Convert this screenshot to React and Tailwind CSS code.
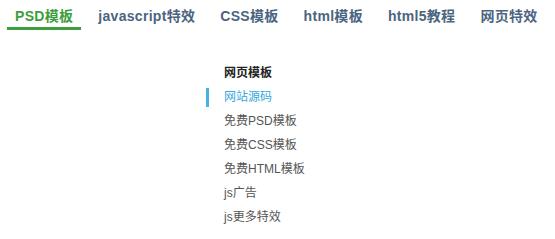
export default function App() {
  const tabs = ["PSD模板", "javascript特效", "CSS模板", "html模板", "html5教程", "网页特效"];
  const items = ["免费PSD模板", "免费CSS模板", "免费HTML模板", "js广告", "js更多特效"];
  return (
    <div className="w-[555px] h-[239px] bg-white overflow-hidden" style={{ fontFamily: '"Liberation Sans", "Noto Sans CJK SC", sans-serif' }}>
      <div className="flex pl-[7px] gap-[9px]">
        {tabs.map((t, i) => (
          <div
            key={t}
            className={
              "px-2 pt-[6px] pb-px text-[14px] leading-[20px] font-bold tracking-[0.3px] whitespace-nowrap border-b-[3px] " +
              (i === 0 ? "text-[#3e9e3e] border-[#3e9e3e]" : "text-[#4b6480] border-transparent")
            }
          >
            {t}
          </div>
        ))}
      </div>
      <div className="ml-[206px] mt-[31px] flex flex-col text-[12px]">
        <div className="h-[24px] pl-[18px] flex items-center font-bold text-[#222]">网页模板</div>
        <div className="h-[24px] flex items-center">
          <div className="w-[3px] h-[19px] bg-[#45b3e3]" />
          <span className="ml-[15px] text-[#35a8dc]">网站源码</span>
        </div>
        {items.map((t) => (
          <div key={t} className="h-[24px] pl-[18px] flex items-center text-[#555]">{t}</div>
        ))}
      </div>
    </div>
  );
}
